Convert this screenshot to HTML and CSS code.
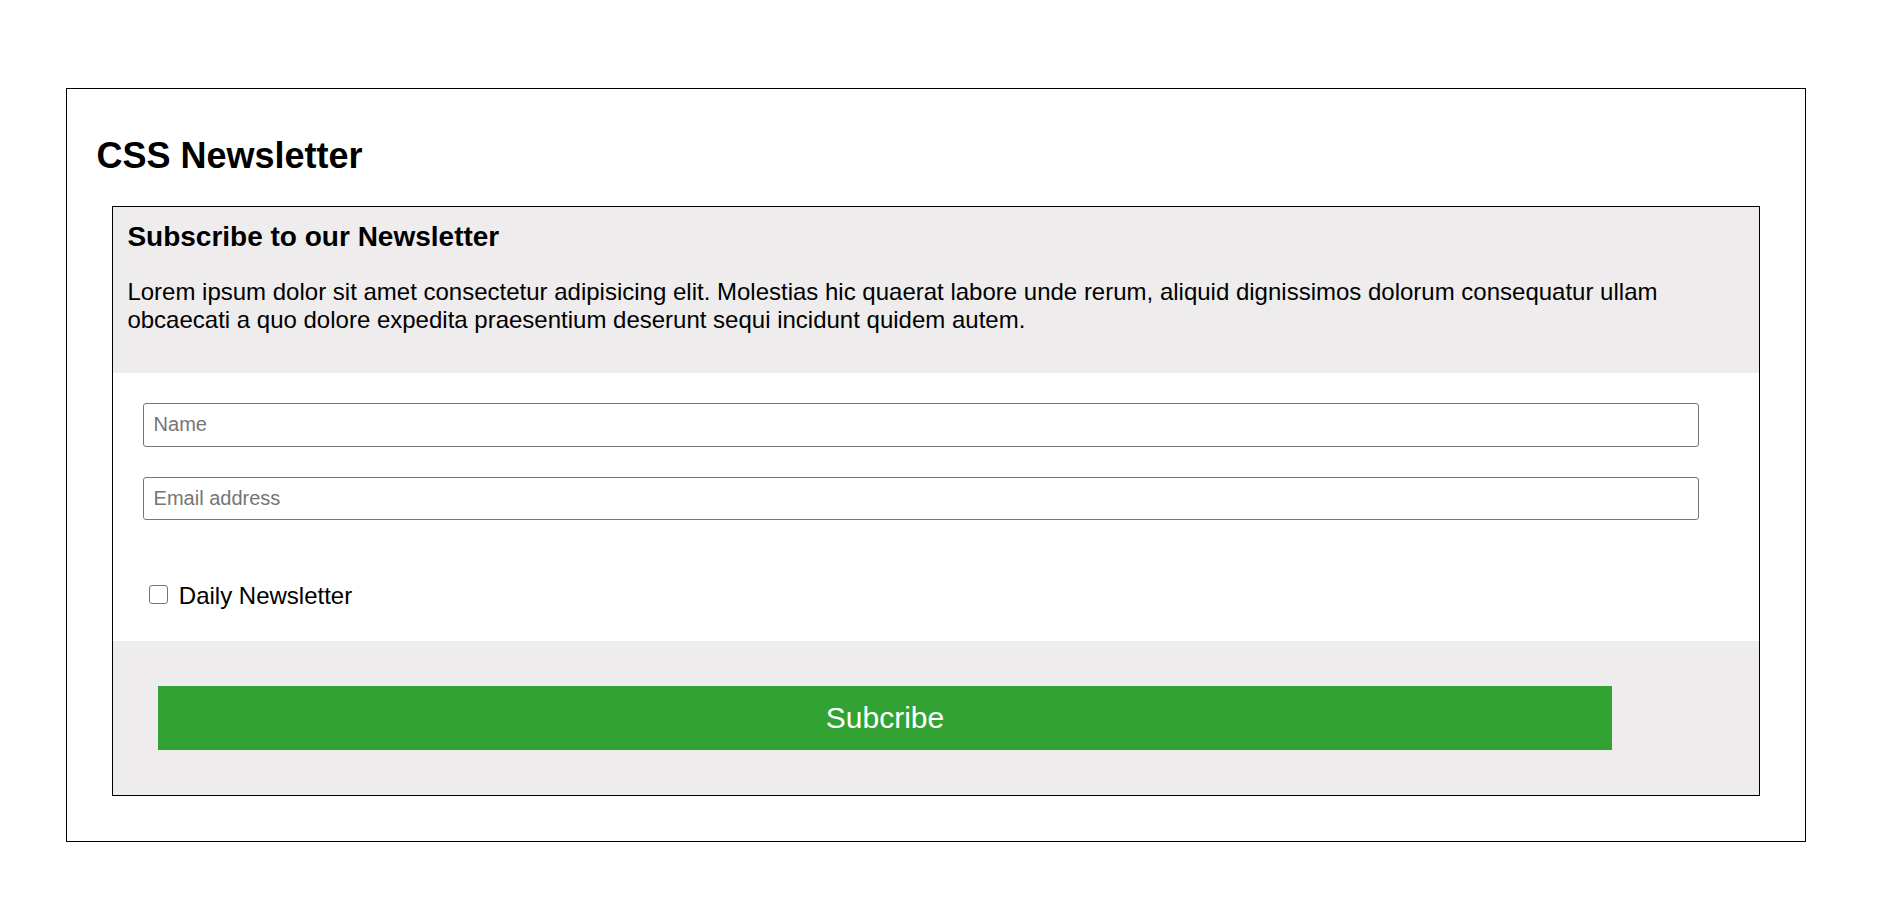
FILE: index.html
```html
<!DOCTYPE html>
<html lang="en">
<head>
<meta charset="utf-8">
<title>CSS Newsletter</title>
<link rel="stylesheet" href="styles.css">
</head>
<body>
<div class="page">
  <h1 class="title">CSS Newsletter</h1>
  <div class="card">
    <div class="card-head">
      <h2 class="card-title">Subscribe to our Newsletter</h2>
      <p class="card-text">Lorem ipsum dolor sit amet consectetur adipisicing elit. Molestias hic quaerat labore unde rerum, aliquid dignissimos dolorum consequatur ullam obcaecati a quo dolore expedita praesentium deserunt sequi incidunt quidem autem.</p>
    </div>
    <form class="card-form">
      <input class="field" type="text" placeholder="Name">
      <input class="field field-email" type="email" placeholder="Email address">
      <label class="check-row"><input class="check" type="checkbox"><span class="check-label">Daily Newsletter</span></label>
    </form>
    <div class="card-foot">
      <button class="btn" type="button">Subcribe</button>
    </div>
  </div>
</div>
</body>
</html>
```
FILE: styles.css
```css
* { box-sizing: border-box; }
html, body { margin: 0; padding: 0; background: #fff; }
body {
  font-family: "Liberation Sans", Arial, sans-serif;
  color: #000;
}
.page {
  margin: 88px 0 0 66px;
  width: 1740px;
  border: 1px solid #000;
  padding: 45.5px 29.5px 45px 29.5px;
}
.title {
  margin: 0 0 29.5px 0;
  font-size: 36px;
  font-weight: bold;
  line-height: normal;
}
.card {
  margin: 0 15.5px;
  border: 1px solid #000;
}
.card-head {
  background: #eeeced;
  padding: 13.5px 14.4px 39.5px 14.4px;
}
.card-title {
  margin: 0 0 25px 0;
  font-size: 28px;
  font-weight: bold;
  line-height: normal;
}
.card-text {
  margin: 0;
  font-size: 24px;
  line-height: normal;
}
.card-form {
  padding: 30px 60px 31px 30px;
  background: #fff;
}
.field {
  display: block;
  width: 100%;
  height: 43.5px;
  margin: 0;
  padding: 0 9.6px;
  border: 1px solid #767676;
  border-radius: 3px;
  font-family: "Liberation Sans", Arial, sans-serif;
  font-size: 20px;
  color: #000;
  background: #fff;
  outline: none;
}
.field::placeholder { color: #757575; }
.field-email {
  margin-top: 30.8px;
  height: 43px;
}
.check-row {
  display: flex;
  align-items: flex-start;
  height: 28px;
  margin-top: 61.5px;
  padding-left: 6.3px;
  font-size: 24px;
  line-height: normal;
}
.check {
  appearance: none;
  -webkit-appearance: none;
  flex: none;
  width: 19px;
  height: 19px;
  margin: 3.2px 10.5px 0 0;
  border: 1px solid #767676;
  border-radius: 3px;
  background: #fff;
}
.check-label { line-height: normal; }
.card-foot {
  background: #eeeced;
  padding: 45px 0 45px 45px;
}
.btn {
  display: block;
  width: 1454px;
  height: 64px;
  margin: 0;
  padding: 0;
  border: none;
  background: #32a332;
  color: #fff;
  font-family: "Liberation Sans", Arial, sans-serif;
  font-size: 30px;
  cursor: pointer;
}
```
